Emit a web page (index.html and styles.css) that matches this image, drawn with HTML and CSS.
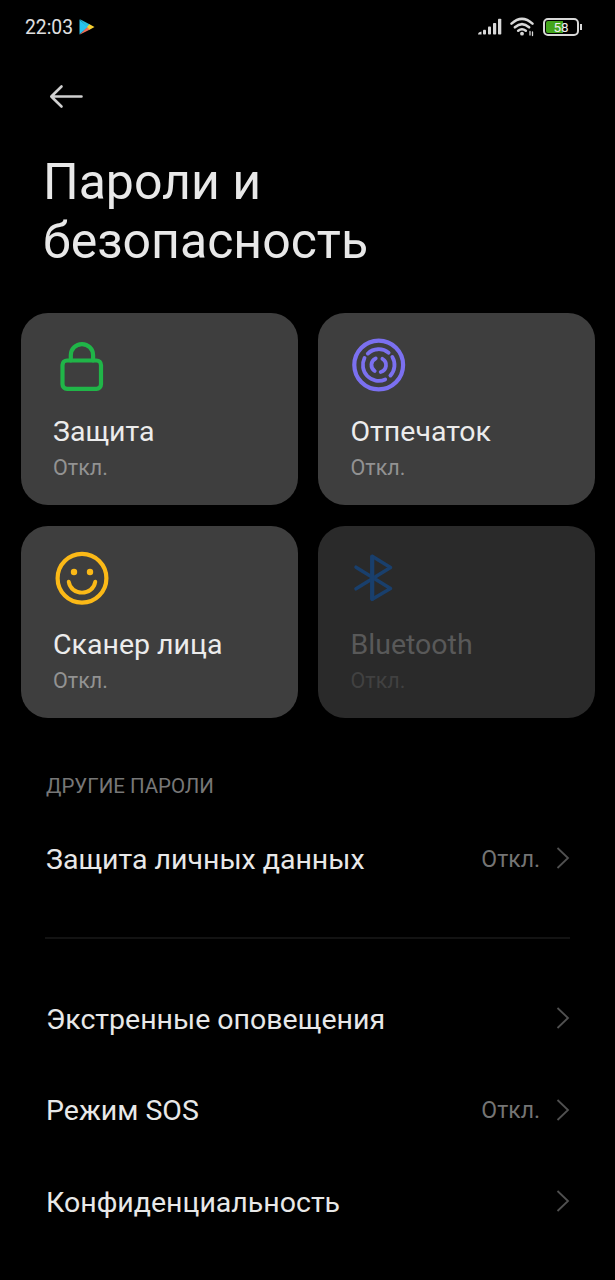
FILE: index.html
```html
<!DOCTYPE html>
<html lang="ru">
<head>
<meta charset="utf-8">
<title>Пароли и безопасность</title>
<link rel="stylesheet" href="styles.css">
</head>
<body>
<div class="screen">
  <header class="status">
    <div class="status-left">
      <span class="clock">22:03</span>
      <svg class="play" width="16" height="18" viewBox="0 0 16 18">
        <path fill="#27c4f0" d="M.5 1.500v15L9 9z"/>
        <path fill="#2cc0dc" d="M.5 1L11 6.600 8.500 9.500z"/>
        <path fill="#f0705a" d="M.5 16.700L11 11.400 8.500 9z"/>
        <path fill="#f7d032" d="M10.500 6.300L15.500 9l-5 2.700L8 9z"/>
      </svg>
    </div>
    <div class="status-right">
      <svg width="24" height="18" viewBox="0 0 24 18" fill="#d8d8d8">
        <path d="M0 16.500Q0 14 3.500 13.500v3z"/>
        <rect x="5" y="11.800" width="3" height="4.700" rx=".8"/>
        <rect x="10" y="8.500" width="3" height="8" rx=".8"/>
        <rect x="15" y="5" width="3.200" height="11.500" rx=".8"/>
        <rect x="20" y=".7" width="3.300" height="15.800" rx=".8"/>
      </svg>
      <svg class="wifi" width="25" height="20" viewBox="0 0 25 20" fill="none" stroke="#d8d8d8" stroke-width="2.500" stroke-linecap="round">
        <path d="M1.500 6.700Q12 -3 22.500 6.700M4.900 10.300Q12 4 19.100 10.300M8.200 13.700Q12 10.700 15.800 13.700"/>
        <circle cx="12" cy="16.700" r="1.900" fill="#d8d8d8" stroke="none"/>
        <path stroke-width="1.300" d="M20 14.500v3.500M22.500 15v3.500"/>
      </svg>
      <div class="battery"><span class="charge"></span><span class="percent">58</span></div>
    </div>
  </header>

  <nav class="topbar">
    <svg width="36" height="26" viewBox="0 0 36 26" fill="none" stroke="#d0d0d0" stroke-width="2.600" stroke-linecap="round" stroke-linejoin="round">
      <path d="M33.500 13.500H3.500M13.500 3.500L3.300 13.500l10.200 10"/>
    </svg>
  </nav>

  <h1 class="title">Пароли и<br>безопасность</h1>

  <main>
    <section class="cards">
      <article class="card">
        <svg class="icon" viewBox="0 0 60 60" stroke="#20b548">
          <rect x="12.500" y="25.500" width="38.500" height="28.300" rx="4.500"/>
          <path d="M20.800 25.500V20.200a11 11 0 0 1 22.300 0v5.300"/>
        </svg>
        <h2 class="card-title">Защита</h2>
        <p class="card-state">Откл.</p>
      </article>
      <article class="card">
        <svg class="icon" viewBox="0 0 60 60" stroke="#7b70f0">
          <g transform="translate(31.700 30)">
            <circle r="24.400"/>
            <g stroke-width="3.800">
              <path d="M-10.900 -11.400A15.800 15.800 0 0 1 9.900 -12.300M13.600 -8.100A15.800 15.800 0 0 1 11.700 10.600M-14.200 -7A15.800 15.800 0 0 0 6.500 14.400"/>
              <path d="M-3 -6.600A7.200 7.200 0 0 0 -4 6M3.700 -6.200A7.200 7.200 0 0 1 2 7"/>
            </g>
          </g>
        </svg>
        <h2 class="card-title">Отпечаток</h2>
        <p class="card-state">Откл.</p>
      </article>
      <article class="card">
        <svg class="icon" viewBox="0 0 60 60" stroke="#fbb917">
          <circle cx="32" cy="30.300" r="24.400"/>
          <path stroke-width="3.900" d="M18.700 33.600C21 48.300 43 48.300 45.300 33.600"/>
          <g fill="#fbb917" stroke="none"><circle cx="24" cy="24" r="3.200"/><circle cx="40" cy="24" r="3.200"/></g>
        </svg>
        <h2 class="card-title">Сканер лица</h2>
        <p class="card-state">Откл.</p>
      </article>
      <article class="card disabled">
        <svg class="icon" viewBox="0 0 60 60" stroke="#193f6c">
          <path stroke-width="3.500" d="M9 19.200L43.500 40.500 25.200 51.300V8.300L43.500 19.500 9 40.800"/>
          <path d="M25.200 8.800v42"/>
        </svg>
        <h2 class="card-title">Bluetooth</h2>
        <p class="card-state">Откл.</p>
      </article>
    </section>

    <section class="group">
      <h3 class="group-title">ДРУГИЕ ПАРОЛИ</h3>
      <div class="row">
        <span class="row-title">Защита личных данных</span><span class="row-value">Откл.</span>
        <svg class="chevron" viewBox="0 0 14 24"><path d="M1.500 2L12 12 1.500 22"/></svg>
      </div>
    </section>
    <hr class="divider">
    <section class="group">
      <div class="row">
        <span class="row-title">Экстренные оповещения</span>
        <svg class="chevron" viewBox="0 0 14 24"><path d="M1.500 2L12 12 1.500 22"/></svg>
      </div>
      <div class="row">
        <span class="row-title">Режим SOS</span><span class="row-value">Откл.</span>
        <svg class="chevron" viewBox="0 0 14 24"><path d="M1.500 2L12 12 1.500 22"/></svg>
      </div>
      <div class="row">
        <span class="row-title">Конфиденциальность</span>
        <svg class="chevron" viewBox="0 0 14 24"><path d="M1.500 2L12 12 1.500 22"/></svg>
      </div>
    </section>
  </main>
</div>
</body>
</html>
```
FILE: styles.css
```css
* { box-sizing: border-box; }
body { margin: 0; background: #000; }
h1, h2, h3, p { margin: 0; font-weight: 400; }
svg { display: block; flex: none; }
.screen {
  width: 615px; height: 1280px; overflow: hidden;
  background: #000; color: #e8e8e8;
  font-family: Roboto, "Noto Sans", sans-serif;
}
.status {
  display: flex; justify-content: space-between; align-items: center;
  height: 54px; padding: 0 33px 0 25px;
}
.status-left, .status-right { display: flex; align-items: center; }
.clock { padding-top: 2px; font-size: 19.300px; line-height: 24px; color: #e0e0e0; }
.play { margin-left: 6px; }
.wifi { margin: 0 8px; }
.battery {
  position: relative; display: flex; align-items: center;
  width: 36px; height: 18px; margin-right: 3px; padding: 1px;
  border: 2.500px solid #d8d8d8; border-radius: 5px;
}
.battery::after {
  content: ""; position: absolute; left: 35px; top: 4px;
  width: 2px; height: 6px; background: #d8d8d8;
}
.charge { width: 17px; height: 12px; background: #43a51c; border-radius: 2px 0 0 2px; }
.percent {
  position: absolute; inset: 0; text-align: center;
  font-size: 13.500px; line-height: 14px; color: #eee;
}
.topbar { height: 99px; padding: 29px 0 0 48px; }
.title {
  height: 160px; padding-left: 43px;
  font-size: 50px; line-height: 58.600px; color: #e8e8e8;
}
.cards {
  display: grid; grid-template-columns: 277px 277px;
  grid-auto-rows: 192px; gap: 20.500px; padding-left: 20.500px;
}
.card { padding: 22px 0 0 32.500px; border-radius: 27px; background: #3e3e3e; }
.icon {
  width: 60px; height: 60px; margin: 0 0 20px -3.500px;
  fill: none; stroke-width: 4.200; stroke-linecap: round; stroke-linejoin: round;
}
.card-title { font-size: 28.500px; line-height: 34px; color: #ececec; }
.card-state { margin-top: 6px; font-size: 21.500px; line-height: 26px; color: #929292; }
.disabled { background: #2a2a2a; }
.disabled .card-title { color: #595959; }
.disabled .card-state { color: #414141; }
.group { padding: 0 45px 0 46px; }
.group-title {
  padding-top: 54px; height: 95px;
  font-size: 20.500px; line-height: 28px; color: #777;
}
.row { display: flex; align-items: center; height: 91.300px; }
.row-title { flex: 1; padding-top: 3px; font-size: 28.500px; line-height: 34px; }
.row-value { margin-right: 16px; padding-top: 3px; font-size: 23px; line-height: 28px; color: #747474; }
.chevron { width: 14px; height: 24px; fill: none; stroke: #505050; stroke-width: 1.800; }
.divider { height: 2px; margin: 33px 45px 34px; border: 0; background: #131313; }
```
